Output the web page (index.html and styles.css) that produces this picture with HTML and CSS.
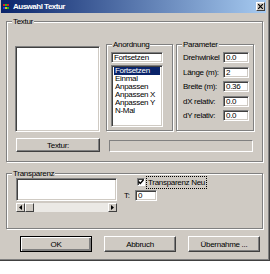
FILE: index.html
```html
<!DOCTYPE html>
<html>
<head>
    <meta charset="utf-8">
    <link rel="stylesheet" href="styles.css">
</head>
<body>
    <div class="dialog">
        <div class="titlebar">
            <svg class="app-icon" width="7" height="7" viewBox="0 0 7 7">
                <rect x="0" y="1" width="2" height="2" fill="#e02020"/>
                <rect x="2" y="1" width="2" height="2" fill="#20c020"/>
                <rect x="4" y="1" width="2" height="2" fill="#e02020"/>
                <rect x="0" y="4" width="2" height="2" fill="#2040e0"/>
                <rect x="2" y="4" width="2" height="2" fill="#e0c020"/>
                <rect x="4" y="4" width="2" height="2" fill="#20c020"/>
            </svg>
            <span class="title">Auswahl Textur</span>
            <span class="close-btn">
                <svg width="5" height="5" viewBox="0 0 5 5">
                    <path d="M0 0 L5 5 M5 0 L0 5" stroke="#000" stroke-width="1.2"/>
                </svg>
            </span>
        </div>

        <div class="content">
            <div class="group group-textur">
                <span class="legend">Textur</span>
                <div class="textur-row">
                    <div class="preview sunken"></div>

                    <div class="group group-anordnung">
                        <span class="legend">Anordnung</span>
                        <div class="edit combo-edit">Fortsetzen</div>
                        <div class="listbox sunken">
                            <div class="list-item selected">Fortsetzen</div>
                            <div class="list-item">Einmal</div>
                            <div class="list-item">Anpassen</div>
                            <div class="list-item">Anpassen X</div>
                            <div class="list-item">Anpassen Y</div>
                            <div class="list-item">N-Mal</div>
                        </div>
                    </div>

                    <div class="group group-parameter">
                        <span class="legend">Parameter</span>
                        <div class="param-row">
                            <span class="param-label">Drehwinkel</span>
                            <span class="edit param-edit">0.0</span>
                        </div>
                        <div class="param-row">
                            <span class="param-label">Länge (m):</span>
                            <span class="edit param-edit">2</span>
                        </div>
                        <div class="param-row">
                            <span class="param-label">Breite (m):</span>
                            <span class="edit param-edit">0.36</span>
                        </div>
                        <div class="param-row">
                            <span class="param-label">dX relativ:</span>
                            <span class="edit param-edit">0.0</span>
                        </div>
                        <div class="param-row">
                            <span class="param-label">dY relativ:</span>
                            <span class="edit param-edit">0.0</span>
                        </div>
                    </div>
                </div>

                <div class="textur-row2">
                    <div class="btn btn-textur">Textur:</div>
                    <div class="static-field"></div>
                </div>
            </div>

            <div class="group group-transparenz">
                <span class="legend">Transparenz</span>
                <div class="trans-left">
                    <div class="trans-box sunken"></div>
                    <div class="scrollbar">
                        <span class="scroll-btn">
                            <svg width="3" height="5" viewBox="0 0 3 5"><path d="M3 0 L0 2.5 L3 5 Z" fill="#000"/></svg>
                        </span>
                        <span class="scroll-thumb"></span>
                        <span class="scroll-track"></span>
                        <span class="scroll-btn">
                            <svg width="3" height="5" viewBox="0 0 3 5"><path d="M0 0 L3 2.5 L0 5 Z" fill="#000"/></svg>
                        </span>
                    </div>
                </div>
                <div class="trans-right">
                    <div class="check-row">
                        <span class="checkbox">
                            <svg width="6" height="6" viewBox="0 0 6 6"><path d="M0.5 2.5 L2.3 4.5 L5.5 0.8" stroke="#000" stroke-width="1.4" fill="none"/></svg>
                        </span>
                        <span class="check-label">Transparenz Neu</span>
                    </div>
                    <div class="t-row">
                        <span class="t-label">T:</span>
                        <span class="edit t-edit">0</span>
                    </div>
                </div>
            </div>

            <div class="button-row">
                <div class="btn btn-default">OK</div>
                <div class="btn">Abbruch</div>
                <div class="btn">Übernahme ...</div>
            </div>
        </div>
    </div>
</body>
</html>
```

FILE: styles.css
```css
* {
    box-sizing: border-box;
}

body {
    margin: 0;
    background: #fff;
    font-family: 'Liberation Sans', Arial, sans-serif;
    font-size: 8px;
    letter-spacing: -0.3px;
    color: #000;
}

.dialog {
    width: 270px;
    height: 261px;
    padding: 0 3px 0 1px;
    background: #cfcac3;
    border-right: 1px solid #404040;
    border-bottom: 1px solid #404040;
    box-shadow: inset -1px -1px 0 #808080;
}

/* Titelleiste */
.titlebar {
    height: 13px;
    display: flex;
    align-items: center;
    background: linear-gradient(to right, #0a246a, #a6caf0);
    color: #fff;
}

.app-icon {
    margin-left: 2px;
}

.title {
    margin-left: 3px;
    font-weight: bold;
    font-size: 8px;
    letter-spacing: -0.5px;
    flex: 1;
}

.close-btn {
    width: 9px;
    height: 9px;
    margin-right: 1px;
    display: flex;
    align-items: center;
    justify-content: center;
    background: #cfcac3;
    border: 1px solid;
    border-color: #fff #404040 #404040 #fff;
}

.content {
    padding: 8px 3px 0 5px;
}

/* Gruppenrahmen */
.group {
    position: relative;
    border: 1px solid #808080;
    box-shadow: inset 1px 1px 0 #fff, 1px 1px 0 #fff;
}

.legend {
    position: absolute;
    top: -5px;
    left: 5px;
    padding: 0 1px;
    line-height: 9px;
    background: #cfcac3;
}

.sunken {
    background: #fff;
    border: 1px solid;
    border-color: #808080 #fff #fff #808080;
    box-shadow: inset 1px 1px 0 #404040, inset -1px -1px 0 #cfcac3;
}

.edit {
    display: block;
    background: #fff;
    border: 1px solid;
    border-color: #808080 #fff #fff #808080;
    box-shadow: inset 1px 1px 0 #404040, inset -1px -1px 0 #cfcac3;
    padding: 0 2px;
    line-height: 9px;
}

.btn {
    display: flex;
    align-items: center;
    justify-content: center;
    width: 72px;
    height: 16px;
    background: #cfcac3;
    border: 1px solid;
    border-color: #fff #404040 #404040 #fff;
    box-shadow: inset -1px -1px 0 #808080;
}

.btn-default {
    border: 1px solid #000;
    box-shadow: inset 1px 1px 0 #fff, inset -2px -2px 0 #808080;
}

/* Gruppe Textur */
.group-textur {
    height: 141px;
    padding: 22px 0 0 8px;
}

.textur-row {
    display: flex;
    align-items: flex-start;
}

.preview {
    width: 85px;
    height: 86px;
    margin-top: 2px;
}

.group-anordnung {
    width: 67px;
    height: 87px;
    margin-left: 6px;
    padding: 7px 0 0 4px;
}

.combo-edit {
    width: 52px;
    height: 11px;
}

.listbox {
    width: 52px;
    height: 62px;
    margin-top: 2px;
    padding: 1px 2px;
}

.list-item {
    height: 8px;
    line-height: 8px;
    padding-left: 1px;
}

.list-item.selected {
    background: #0a246a;
    color: #fff;
}

.group-parameter {
    width: 78px;
    height: 87px;
    margin-left: 3px;
    padding: 7px 0 0 6px;
    display: flex;
    flex-direction: column;
    gap: 3.5px;
}

.param-row {
    display: flex;
    align-items: center;
    height: 11px;
}

.param-label {
    width: 40px;
}

.param-edit {
    width: 26px;
    height: 11px;
}

.textur-row2 {
    display: flex;
    align-items: flex-start;
    margin-top: 6px;
}

.btn-textur {
    width: 84px;
    height: 14px;
    margin-left: 1px;
}

.static-field {
    width: 144px;
    height: 12px;
    margin: 2px 0 0 9px;
    border: 1px solid;
    border-color: #808080 #fff #fff #808080;
}

/* Gruppe Transparenz */
.group-transparenz {
    height: 56px;
    margin-top: 11px;
    padding: 2px 0 0 9px;
    display: flex;
    align-items: flex-start;
}

.trans-left {
    width: 101px;
    margin-top: 2px;
}

.trans-box {
    height: 23px;
}

.scrollbar {
    display: flex;
    height: 9px;
    margin-top: 2px;
    background: #ebe9e5;
}

.scroll-btn,
.scroll-thumb {
    width: 9px;
    height: 9px;
    display: flex;
    align-items: center;
    justify-content: center;
    background: #cfcac3;
    border: 1px solid;
    border-color: #fff #404040 #404040 #fff;
}

.scroll-track {
    flex: 1;
}

.trans-right {
    margin-left: 7px;
}

.check-row {
    display: flex;
    align-items: center;
    height: 12px;
    padding-left: 13px;
}

.checkbox {
    width: 8px;
    height: 8px;
    display: flex;
    align-items: center;
    justify-content: center;
    background: #fff;
    border: 1px solid;
    border-color: #808080 #fff #fff #808080;
    box-shadow: inset 1px 1px 0 #404040;
}

.check-label {
    margin-left: 2px;
    padding: 1px 1px;
    line-height: 9px;
    outline: 1px dotted #000;
}

.t-row {
    display: flex;
    align-items: center;
    margin-top: 2px;
}

.t-label {
    width: 11px;
}

.t-edit {
    width: 22px;
    height: 11px;
}

/* Buttons unten */
.button-row {
    display: flex;
    gap: 12px;
    margin-top: 7px;
    padding-left: 14px;
}
```
